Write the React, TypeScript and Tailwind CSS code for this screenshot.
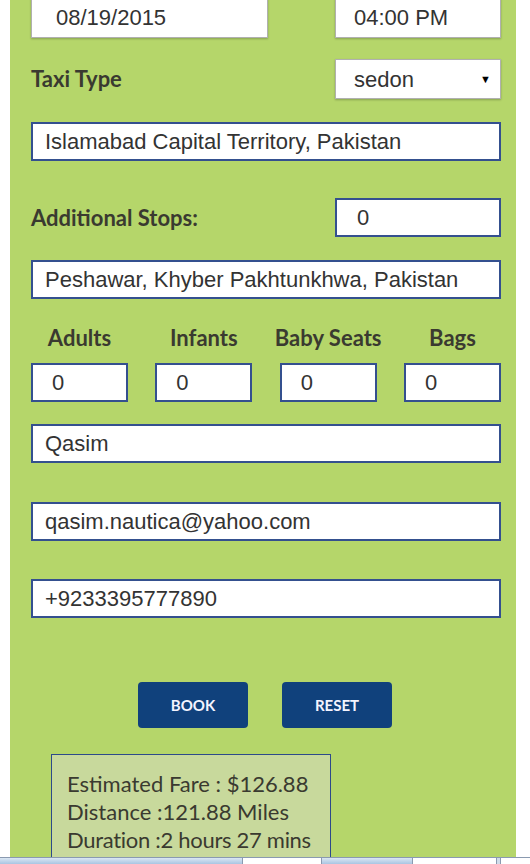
import React from "react";

const blueInput =
  "block h-[39px] border-2 border-[#34508f] bg-white px-[12px] text-[22px] text-[#333] outline-none [font-family:'Liberation_Sans',Arial,sans-serif]";
const grayInput =
  "block h-[40px] border border-[#b0b0b0] bg-white px-[18px] text-[22px] text-[#333] shadow-[0_1px_2px_rgba(0,0,0,0.25)] outline-none [font-family:'Liberation_Sans',Arial,sans-serif]";
const label = "text-[22px] font-bold leading-[26px] text-[#3a3a30] [font-family:Lato,sans-serif]";

function Counter({ title }: { title: string }) {
  return (
    <div className="flex w-[97px] flex-col items-center">
      <span className={label + " whitespace-nowrap"}>{title}</span>
      <input readOnly value="0" className={blueInput + " mt-[12px] h-[36px] w-[97px] px-[19px]"} />
    </div>
  );
}

export default function App() {
  return (
    <div className="relative flex h-[864px] w-[530px] flex-col overflow-hidden bg-white">
      <div className="flex flex-1">
        <div className="w-[10px] bg-white" />
        <div className="flex w-[506px] flex-col bg-[#b5d66a] pl-[21px] pr-[15px]">
          {/* date / time */}
          <div className="mt-[-2px] flex justify-between">
            <input readOnly value="08/19/2015" className={grayInput + " w-[237px] px-[24px]"} />
            <input readOnly value="04:00 PM" className={grayInput + " w-[166px] px-[12px]"} />
          </div>

          {/* taxi type */}
          <div className="mt-[21px] flex items-center justify-between">
            <span className={label}>Taxi Type</span>
            <div className={grayInput + " flex w-[166px] items-center justify-between pl-[18px] pr-[9px]"}>
              <span>sedon</span>
              <span className="text-[11px] text-black">▼</span>
            </div>
          </div>

          <input
            readOnly
            value="Islamabad Capital Territory, Pakistan"
            className={blueInput + " mt-[23px] w-[470px]"}
          />

          {/* additional stops */}
          <div className="mt-[37px] flex items-center justify-between">
            <span className={label}>Additional Stops:</span>
            <input readOnly value="0" className={blueInput + " w-[166px] px-[20px]"} />
          </div>

          <input
            readOnly
            value="Peshawar, Khyber Pakhtunkhwa, Pakistan"
            className={blueInput + " mt-[23px] w-[470px]"}
          />

          {/* passengers */}
          <div className="mt-[26px] flex justify-between">
            <Counter title="Adults" />
            <Counter title="Infants" />
            <Counter title="Baby Seats" />
            <Counter title="Bags" />
          </div>

          <input readOnly value="Qasim" className={blueInput + " mt-[22px] w-[470px]"} />
          <input
            readOnly
            value="qasim.nautica@yahoo.com"
            className={blueInput + " mt-[39px] w-[470px] px-[4px]"}
          />
          <input readOnly value="+9233395777890" className={blueInput + " mt-[38px] w-[470px]"} />

          {/* buttons */}
          <div className="mt-[64px] flex gap-[34px] pl-[107px]">
            <button className="h-[46px] w-[110px] rounded-[4px] bg-[#10417c] text-[15px] font-bold text-[#f4f4ff] [font-family:Lato,sans-serif]">
              BOOK
            </button>
            <button className="h-[46px] w-[110px] rounded-[4px] bg-[#10417c] text-[15px] font-bold text-[#f4f4ff] [font-family:Lato,sans-serif]">
              RESET
            </button>
          </div>

          {/* fare */}
          <div className="ml-[20px] mt-[26px] w-[280px] flex-1 whitespace-nowrap border-x border-t border-[#2d4a8a] bg-[#c8d99c] px-[15px] pt-[15px] text-[22px] leading-[28px] text-[#3a3a30] [font-family:Lato,sans-serif]">
            <div>Estimated Fare : $126.88</div>
            <div>Distance :121.88 Miles</div>
            <div className="tracking-[-0.3px]">Duration :2 hours 27 mins</div>
          </div>
        </div>
        <div className="flex-1 bg-white" />
      </div>

      {/* bottom strip */}
      <div className="flex h-[7px] border-t border-[#8a9ab0]">
        <div className="w-[242px] bg-gradient-to-b from-[#dbe7f3] to-[#a9c5e2]" />
        <div className="w-[80px] border-x border-[#8a9ab0] bg-white" />
        <div className="w-[90px] bg-gradient-to-b from-[#dbe7f3] to-[#a9c5e2]" />
        <div className="w-[85px] border-x border-[#8a9ab0] bg-white" />
        <div className="w-[3px] bg-[#d0dcea]" />
        <div className="flex-1 border-l border-[#8a9ab0] bg-white" />
      </div>
    </div>
  );
}
